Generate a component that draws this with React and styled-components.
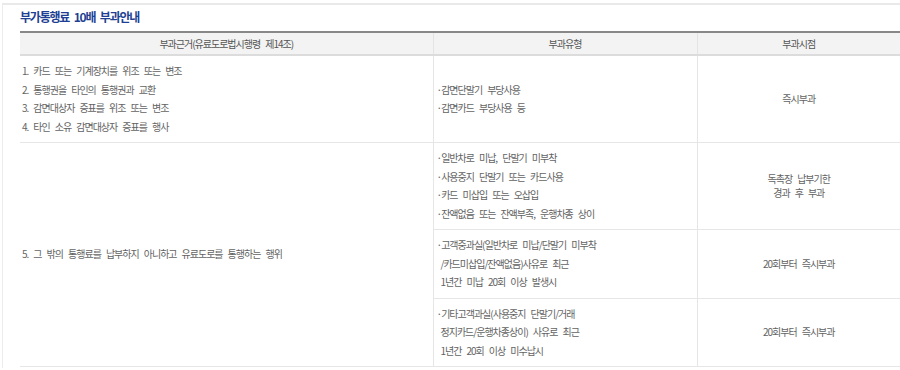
import React from 'react';
import styled, { createGlobalStyle } from 'styled-components';

const GlobalStyle = createGlobalStyle`
  body {
    margin: 0;
    background: #fff;
    overflow: hidden;
    font-family: "Noto Sans CJK KR", "Noto Sans", sans-serif;
  }
`;

const Frame = styled.div`
  margin: 3px 0 0 2px;
  height: 365px;
  border-top: 2px solid #e9e9e9;
  border-left: 1px solid #ececec;
  padding: 4px 0 0 17px;
  box-sizing: border-box;
`;

const Title = styled.h3`
  margin: 0 0 6px;
  font-size: 12px;
  line-height: 16px;
  font-weight: 700;
  letter-spacing: -1.2px;
  word-spacing: 3px;
  color: #1e3f93;
`;

const Table = styled.table`
  width: 880px;
  border-collapse: collapse;
  table-layout: fixed;
  border-top: 2px solid #888;
  font-size: 10px;
  letter-spacing: -1px;
  word-spacing: 3.8px;
`;

const Th = styled.th`
  height: 21px;
  padding: 0;
  background: #f3f3f3;
  border-bottom: 2px solid #dcdcdc;
  border-left: 1px solid #e4e4e4;
  color: #555;
  font-weight: 400;
  text-align: center;
  &:first-child { border-left: none; }
`;

const Td = styled.td`
  padding: 6px ${(p) => (p.$wide ? '2px' : '3px')};
  border: 1px solid #e6e6e6;
  border-left: ${(p) => (p.$first ? 'none' : '1px solid #e6e6e6')};
  border-right: ${(p) => (p.$last ? 'none' : '1px solid #e6e6e6')};
  color: #636363;
  line-height: 18.5px;
  vertical-align: middle;
  text-align: ${(p) => (p.$center ? 'center' : 'left')};
`;

const Line = styled.div`
  padding-left: ${(p) => (p.$bullet ? '4px' : '0')};
  text-indent: ${(p) => (p.$bullet ? '-4px' : '0')};
`;

const Tight = styled.div`
  line-height: 14px;
`;

const rules = [
  '1. 카드 또는 기계장치를 위조 또는 변조',
  '2. 통행권을 타인의 통행권과 교환',
  '3. 감면대상자 증표를 위조 또는 변조',
  '4. 타인 소유 감면대상자 증표를 행사',
];

const Bullets = ({ lines }) => (
  <>
    {lines.map((l) => (
      <Line key={l} $bullet>
        ·{l}
      </Line>
    ))}
  </>
);

const Wrapped = ({ lines }) => (
  <Line $bullet>
    {lines.map((l, i) => (
      <React.Fragment key={l}>
        {i === 0 ? '·' : ''}
        {l}
        {i < lines.length - 1 && <br />}
      </React.Fragment>
    ))}
  </Line>
);

export default function App() {
  return (
    <>
      <GlobalStyle />
      <Frame>
        <Title>부가통행료 10배 부과안내</Title>
        <Table>
          <colgroup>
            <col style={{ width: 413 }} />
            <col style={{ width: 264 }} />
            <col />
          </colgroup>
          <thead>
            <tr>
              <Th>부과근거(유료도로법시행령 제14조)</Th>
              <Th>부과유형</Th>
              <Th>부과시점</Th>
            </tr>
          </thead>
          <tbody>
            <tr>
              <Td $first $wide>
                {rules.map((r) => (
                  <Line key={r}>{r}</Line>
                ))}
              </Td>
              <Td>
                <Bullets lines={['감면단말기 부당사용', '감면카드 부당사용 등']} />
              </Td>
              <Td $last $center>즉시부과</Td>
            </tr>
            <tr>
              <Td $first $wide rowSpan={3}>
                5. 그 밖의 통행료를 납부하지 아니하고 유료도로를 통행하는 행위
              </Td>
              <Td>
                <Bullets
                  lines={[
                    '일반차로 미납, 단말기 미부착',
                    '사용중지 단말기 또는 카드사용',
                    '카드 미삽입 또는 오삽입',
                    '잔액없음 또는 잔액부족, 운행차종 상이',
                  ]}
                />
              </Td>
              <Td $last $center>
                <Tight>
                  독촉장 납부기한
                  <br />
                  경과 후 부과
                </Tight>
              </Td>
            </tr>
            <tr>
              <Td>
                <Wrapped
                  lines={[
                    '고객중과실(일반차로 미납/단말기 미부착',
                    '/카드미삽입/잔액없음)사유로 최근',
                    '1년간 미납 20회 이상 발생시',
                  ]}
                />
              </Td>
              <Td $last $center>20회부터 즉시부과</Td>
            </tr>
            <tr>
              <Td>
                <Wrapped
                  lines={[
                    '기타고객과실(사용중지 단말기/거래',
                    '정지카드/운행차종상이) 사유로 최근',
                    '1년간 20회 이상 미수납시',
                  ]}
                />
              </Td>
              <Td $last $center>20회부터 즉시부과</Td>
            </tr>
          </tbody>
        </Table>
      </Frame>
    </>
  );
}
